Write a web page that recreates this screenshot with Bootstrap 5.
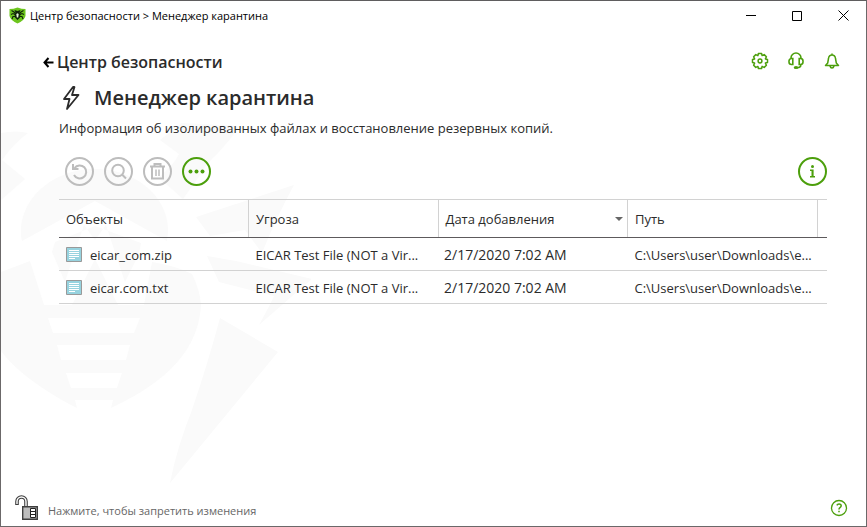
<!DOCTYPE html>
<html lang="ru">
<head>
<meta charset="utf-8">
<meta name="viewport" content="width=device-width, initial-scale=1">
<title>Менеджер карантина</title>
<link href="https://cdn.jsdelivr.net/npm/bootstrap@5.3.0/dist/css/bootstrap.min.css" rel="stylesheet">
<style>
:root{--green:#4c9f0c;--ink:#2b2b2b}
body{font-family:"Open Sans","Noto Sans",sans-serif;font-size:13px;line-height:20px;color:var(--ink);background:#fff}
.app-window{min-height:100vh;border:1px solid #6b6869;border-top-color:#5f5d5e;isolation:isolate;overflow:hidden}
.watermark{position:absolute;left:0;top:0;z-index:-1;fill:#fafafa;pointer-events:none}
.title-bar{height:29px;padding-left:8px;font-size:11px;color:#000}
.win-btn{width:46px;height:29px;padding:0;border:0;background:none;color:#000;display:flex;align-items:center;justify-content:center}
svg{display:block;flex:none}
.tool-icon{border:0;background:none;padding:0;color:var(--green)}
.page-top{padding:18px 25px 0 42px}
.back-link{font-size:16px;line-height:29px;font-weight:600;color:var(--ink);text-decoration:none;gap:3px}
.page-body{padding:0 39px 0 58px}
.page-title{font-size:20px;line-height:33px;font-weight:600;gap:13px}
.tools{padding:19px 0 13px 6px;gap:10px}
.round-btn{width:29px;height:29px;border:2px solid #bdbdbd;border-radius:50%;background:none;color:#bdbdbd;padding:0;display:flex;align-items:center;justify-content:center}
.round-btn.is-active{border-color:var(--green);color:var(--green)}
.quarantine{table-layout:fixed;border-collapse:collapse;width:100%;color:var(--ink)}
.quarantine th{height:38px;font-weight:400;padding:1px 7px 0;border-top:1px solid #d2d2d2;border-bottom:1px solid #5d5a5c;border-right:1px solid #d2d2d2;text-align:left}
.quarantine th:last-child{border-right:0;width:10px;padding:0}
.quarantine td{height:33px;padding:2px 0 0 7px;border-bottom:1px solid #d2d2d2;white-space:nowrap;overflow:hidden;text-overflow:ellipsis}
.quarantine .date-cell{font-size:14px;padding-left:6px}
.quarantine td:last-child{padding:0}
.sort-mark{border:4px solid transparent;border-top-color:#666;border-bottom:0;margin-right:-3px}
.lock-btn{border:0;background:none;padding:0;gap:9px;font-size:11px;color:#666}
.page-foot{padding:0 18px 5px 14px}
</style>
</head>
<body>
<div class="app-window position-relative d-flex flex-column">
  <svg class="watermark" width="310" height="500" viewBox="1 1 310 500" aria-hidden="true">
    <path d="M1 133Q16 130 28 133Q14 143 2 160L25 179L1 200Z"/>
    <path d="M22 241C15 205 48 169 95 169S175 205 167 241L95 201Z"/>
    <path d="M160 140L182 123L240 126Q230 140 218 153Q204 166 200 175L183 199Q168 185 158 178Q174 165 179 154Z"/>
    <path d="M196 217L294 185Q276 218 262 253L245 230L210 236Z"/>
    <path d="M207 256L236 261L312 279L259 325Q270 305 274 296L219 282Z"/>
    <path d="M55 242L95 226L141 243L139 254L125 282L106 225L95 240L84 225L65 282L52 252Z"/>
    <path fill-rule="evenodd" d="M1 272L30 261L44 305H72L95 259L118 305H144L152 262Q177 266 192 274Q200 290 201 305C198 360 151 389 111 408L113 400H75L77 408C45 392 15 370 1 351ZM48 318L53 333H134L140 318ZM57 345L61 360H126L130 345ZM66 373L71 388H117L122 373Z"/>
    <path d="M220 318L278 352L170 483Q177 447 192 410Q207 366 220 318Z"/>
  </svg>

  <header class="title-bar d-flex align-items-center">
    <svg width="17" height="17" viewBox="0 0 17 17" aria-hidden="true">
      <path d="M.5 2Q4.500 2 8.500.5Q12.500 2 16.500 2V9Q15 14 8.500 16.500Q2 14 .5 9Z" fill="#6cc51d"/>
      <g stroke="#10240a" stroke-width="1.100" fill="none"><path d="M2.500 3.500L5 5L7 7M14.500 3.500L12 5L10 7M2 7.500L4 6.500L7 8M15 7.500L13 6.500L10 8M3 12L4 9.500L7 9.500M14 12L13 9.500L10 9.500"/></g>
      <path d="M5.500 3L8.500 4L11.500 3L10.500 5.500Q12 8 11 10.500L8.500 13L6 10.500Q5 8 6.500 5.500Z" fill="#10240a"/><path d="M7.300 7L8.500 6.300L9.700 7L9.200 10.500H7.800Z" fill="#e8f7d8"/>
    </svg>
    <span class="ms-1">Центр безопасности &gt; Менеджер карантина</span>
    <div class="d-flex ms-auto">
      <button class="win-btn" aria-label="Свернуть"><svg width="10" height="11" viewBox="0 0 10 11"><path d="M0 5.500H10" stroke="currentColor"/></svg></button>
      <button class="win-btn" aria-label="Развернуть"><svg width="10" height="10" viewBox="0 0 10 10"><path d="M.5.500H9.500V9.500H.5Z" fill="none" stroke="currentColor"/></svg></button>
      <button class="win-btn" aria-label="Закрыть"><svg width="11" height="11" viewBox="0 0 11 11"><path d="M.5.500L10.500 10.500M10.500.500L.5 10.500" stroke="currentColor"/></svg></button>
    </div>
  </header>

  <div class="page-top d-flex justify-content-between align-items-start">
    <a class="back-link d-flex align-items-center" href="#">
      <svg width="11" height="11" viewBox="0 0 11 11"><path d="M5.500 1L1.500 5.500L5.500 10M1.500 5.500H10.500" fill="none" stroke="#000" stroke-width="2"/></svg>
      <span>Центр безопасности</span>
    </a>
    <div class="d-flex align-items-center pt-1">
      <button class="tool-icon me-3" aria-label="Настройки"><svg width="18" height="18" viewBox="0 0 18 18" fill="none" stroke="currentColor" stroke-width="1.500"><path d="M7.400 1.500H10.600L11.100 3.600L13.200 2.600L15.400 4.800L14.400 6.900L16.500 7.400V10.600L14.400 11.100L15.400 13.200L13.200 15.400L11.100 14.400L10.600 16.500H7.400L6.900 14.400L4.800 15.400L2.600 13.200L3.600 11.100L1.500 10.600V7.400L3.600 6.900L2.600 4.800L4.800 2.600L6.900 3.600Z" stroke-linejoin="round"/><circle cx="9" cy="9" r="1.900"/></svg></button>
      <button class="tool-icon" aria-label="Поддержка"><svg width="22" height="18" viewBox="-3 0 22 18" fill="none" stroke="currentColor" stroke-width="1.600"><path d="M3 7V6A5 5 0 0 1 13 6V7M4.800 6.500V12.500H3.500A2.500 2.500 0 0 1 1 10V9A2.500 2.500 0 0 1 3.500 6.500ZM11.200 6.500V12.500H12.500A2.500 2.500 0 0 0 15 10V9A2.500 2.500 0 0 0 12.500 6.500ZM13 12.500Q13 15.500 9 15.700"/><ellipse cx="8" cy="15.600" rx="1.500" ry=".7" fill="currentColor"/></svg></button>
      <button class="tool-icon ms-3" aria-label="Уведомления"><svg width="18" height="18" viewBox="-1 0 18 18" fill="none" stroke="currentColor" stroke-width="1.500"><path d="M1.500 13.500H14.500L12.300 11L11.500 6.500Q11 3 8 3T4.500 6.500L3.700 11ZM6 14Q6.500 16 8 16T10 14M8 3V1.500" stroke-linejoin="round"/></svg></button>
    </div>
  </div>

  <main class="page-body flex-grow-1">
    <h1 class="page-title d-flex align-items-center mb-0 pt-1">
      <svg width="22" height="26" viewBox="0 0 22 26" aria-hidden="true"><path d="M14 2L5 14H10.500L8 24L19.500 10H13L15.500 2Z" fill="none" stroke="#2b2b2b" stroke-width="1.800" stroke-linejoin="round"/></svg>
      Менеджер карантина
    </h1>
    <p class="mb-0 pt-1">Информация об изолированных файлах и восстановление резервных копий.</p>
    <div class="tools d-flex align-items-center">
      <button class="round-btn" disabled aria-label="Восстановить"><svg width="19" height="19" viewBox="0 0 19 19" fill="none" stroke="currentColor" stroke-width="2"><path d="M4.500 6A6.500 6.500 0 1 1 4 13M3 2V7H8.500"/></svg></button>
      <button class="round-btn" disabled aria-label="Проверить"><svg width="19" height="19" viewBox="0 0 19 19" fill="none" stroke="currentColor" stroke-width="2"><circle cx="9" cy="8.500" r="5.800"/><path d="M13 12.500L17 16.500"/></svg></button>
      <button class="round-btn" disabled aria-label="Удалить"><svg width="19" height="19" viewBox="0 0 19 19" fill="none" stroke="currentColor" stroke-width="2"><path d="M2 4.500H17M6.500 4V2H12.500V4M4 5V16.500H15V5"/><path d="M8 7.500V14M11 7.500V14" stroke-width="1.500"/></svg></button>
      <button class="round-btn is-active" aria-label="Ещё"><svg width="17" height="5" viewBox="0 0 17 5" fill="currentColor"><circle cx="2.500" cy="2.500" r="2"/><circle cx="8.500" cy="2.500" r="2"/><circle cx="14.500" cy="2.500" r="2"/></svg></button>
      <button class="round-btn is-active ms-auto" aria-label="Сведения"><svg width="7" height="13" viewBox="0 0 7 13" fill="currentColor"><circle cx="3.500" cy="1.600" r="1.500"/><path d="M1 4.500H4.600V11H6V12.500H1V11H2.500V6H1Z"/></svg></button>
    </div>
    <table class="quarantine">
      <thead><tr><th>Объекты</th><th>Угроза</th><th aria-sort="descending"><div class="d-flex align-items-center justify-content-between">Дата добавления<span class="sort-mark"></span></div></th><th>Путь</th><th></th></tr></thead>
      <tbody>
        <tr><td><div class="d-flex align-items-center gap-2"><svg width="16" height="16" viewBox="0 0 16 16" aria-hidden="true"><path d="M.5.500H15.500V14.500H.5Z" fill="#97d3df" stroke="#999"/><path d="M3 3.500H13M3 5.500H13M3 7.500H13M3 9.500H13M3 11.500H9" stroke="#fff"/></svg>eicar_com.zip</div></td><td>EICAR Test File (NOT a Vir...</td><td class="date-cell">2/17/2020 7:02 AM</td><td>C:\Users\user\Downloads\e...</td><td></td></tr>
        <tr><td><div class="d-flex align-items-center gap-2"><svg width="16" height="16" viewBox="0 0 16 16" aria-hidden="true"><path d="M.5.500H15.500V14.500H.5Z" fill="#97d3df" stroke="#999"/><path d="M3 3.500H13M3 5.500H13M3 7.500H13M3 9.500H13M3 11.500H9" stroke="#fff"/></svg>eicar.com.txt</div></td><td>EICAR Test File (NOT a Vir...</td><td class="date-cell">2/17/2020 7:02 AM</td><td>C:\Users\user\Downloads\e...</td><td></td></tr>
      </tbody>
    </table>
  </main>

  <footer class="page-foot d-flex align-items-end justify-content-between">
    <button class="lock-btn d-flex align-items-end">
      <svg width="24" height="26" viewBox="0 0 24 26" aria-hidden="true"><path d="M2 10V6.500A4.500 4.500 0 0 1 11 6.500V12" fill="none" stroke="#3f3f3f" stroke-width="3.600"/><path d="M2 9V6.500A4.500 4.500 0 0 1 11 6.500V12" fill="none" stroke="#fff" stroke-width="1.400"/><path d="M7.700 11.700H22.300V24.300H7.700Z" fill="#bdbdbd" stroke="#3f3f3f" stroke-width="1.400"/><path d="M15.500 13.500H20.500V22.500H15.500ZM15.500 16.500H20.500M15.500 19.500H20.500" fill="#fff" stroke="#222"/></svg>
      <span>Нажмите, чтобы запретить изменения</span>
    </button>
    <button class="tool-icon pb-1" aria-label="Справка"><svg width="18" height="18" viewBox="0 0 18 18" fill="none" stroke="currentColor"><circle cx="9" cy="9" r="7.500" stroke-width="1.300"/><path d="M6.800 6.300Q7.500 5 9 5Q11.200 5 11.200 6.800Q11.200 7.800 10 8.600Q9 9.300 9 10.500M9 11.800V13.300" stroke-width="1.500"/></svg></button>
  </footer>
</div>
<script src="https://cdn.jsdelivr.net/npm/bootstrap@5.3.0/dist/js/bootstrap.bundle.min.js"></script>
</body>
</html>
